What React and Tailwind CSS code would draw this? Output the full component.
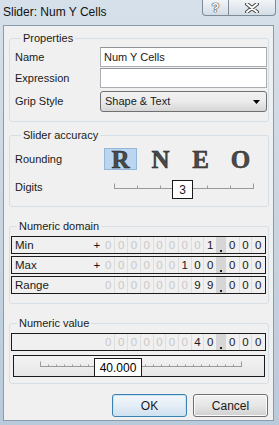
import React from "react";

const font = "font-['Liberation_Sans',Arial,sans-serif]";

function Digit({ value, dim }) {
  return (
    <span
      className={`flex w-[12.7px] items-center justify-center border-l border-[#dedede] first:border-l-0 ${
        dim ? "text-[#c8c8c8]" : "text-[#1a1a1a]"
      }`}
    >
      {value}
    </span>
  );
}

function DigitRow({ label, sign, whole, frac }) {
  const dimCount = 9 - whole.length;
  return (
    <div className="flex h-[18px] items-stretch border border-[#1a1a1a] bg-[#f0f0f0] pr-[1px] text-[11.5px] leading-[16px]">
      <span className="flex-1 pl-[3px] text-[#1a1a1a]">{label}</span>
      <span className="flex w-[10px] items-center justify-center text-[#1a1a1a]">{sign}</span>
      <span className="flex">
        {Array.from({ length: dimCount }).map((_, i) => (
          <Digit key={"z" + i} value="0" dim />
        ))}
        {whole.split("").map((d, i) => (
          <Digit key={"w" + i} value={d} />
        ))}
      </span>
      <span className="relative w-[10px] bg-[#d6d6d6]">
        <span className="absolute bottom-[1px] left-[4px] h-[2px] w-[2px] bg-[#202020]" />
      </span>
      <span className="flex">
        {frac.split("").map((d, i) => (
          <Digit key={"f" + i} value={d} />
        ))}
      </span>
    </div>
  );
}

function Group({ title, className, children }) {
  return (
    <fieldset
      className={`ml-[5px] mr-[4px] rounded-[3px] border border-[#d5dfe5] ${className}`}
    >
      <legend className="ml-[6px] px-[2px] leading-[14px] text-[#1a1a1a]">{title}</legend>
      {children}
    </fieldset>
  );
}

function Ticks({ width, count, tall }) {
  const step = (width - 1) / count;
  return (
    <svg width={width} height="8" className="block">
      <line x1="0" y1="6.5" x2={width} y2="6.5" stroke="#9a9a9a" strokeWidth="1" />
      {Array.from({ length: count + 1 }).map((_, i) => {
        const x = Math.round(i * step) + 0.5;
        const end = i === 0 || i === count;
        const h = end ? 5 : tall ? 3 : 2;
        return <line key={i} x1={x} y1={6.5 - h} x2={x} y2="7" stroke="#9a9a9a" strokeWidth="1" />;
      })}
    </svg>
  );
}

function WinButton({ children, primary }) {
  return (
    <button
      className={`h-[23px] w-[75px] rounded-[3px] border bg-gradient-to-b text-[12px] text-[#1a1a1a] ${
        primary
          ? "border-[#3c7fb1] from-[#f3f8fc] via-[#e4eef6] to-[#cfe0ee] shadow-[inset_0_0_0_1px_#c9e4f5]"
          : "border-[#707070] from-[#f2f2f2] via-[#e6e6e6] to-[#d0d0d0] shadow-[inset_0_0_0_1px_#fbfbfb]"
      }`}
    >
      {children}
    </button>
  );
}

function Letter({ ch, active }) {
  return (
    <span
      className={`flex h-[22px] w-[33px] items-center justify-center font-['Liberation_Serif',serif] text-[25px] font-bold leading-none text-[#4a4a4a] [-webkit-text-stroke:0.5px_#1e1e1e] ${
        active ? "border border-[#94b8dc] bg-[#bcd6ef]" : "border border-transparent"
      }`}
    >
      {ch}
    </span>
  );
}

export default function App() {
  return (
    <div
      className={`${font} flex h-[425px] w-[279px] flex-col overflow-hidden bg-gradient-to-b from-[#d6e0ea] via-[#c9d6e2] to-[#b9cadb] text-[11px]`}
    >
      {/* title bar */}
      <div className="flex h-[25px] shrink-0 items-start">
        <span className="ml-[3px] mt-[3px] text-[12px] text-[#111]">Slider: Num Y Cells</span>
        <div className="ml-auto mr-[3px] flex h-[16px]">
          <span className="flex w-[27px] items-center justify-center rounded-bl-[4px] border border-t-0 border-[#7d8a99] bg-gradient-to-b from-[#f2f5f8] to-[#d3dce6] text-[13px] font-bold leading-none text-white [text-shadow:0_0_1px_#333,0_0_1px_#333,0_0_1px_#333]">
            ?
          </span>
          <span className="flex w-[47px] items-center justify-center rounded-br-[4px] border border-l-0 border-t-0 border-[#7d8a99] bg-gradient-to-b from-[#f2f5f8] to-[#d3dce6]">
            <svg width="14" height="10" viewBox="0 0 14 10">
              <path d="M2 1 L12 9 M12 1 L2 9" stroke="#4a4a4a" strokeWidth="4" strokeLinecap="round" />
              <path d="M2 1 L12 9 M12 1 L2 9" stroke="#ffffff" strokeWidth="2" strokeLinecap="round" />
            </svg>
          </span>
        </div>
      </div>

      {/* client area */}
      <div className="ml-[3px] flex h-[396px] w-[271px] flex-col border border-[#8a9bae] bg-[#f0f0f0]">
        <Group title="Properties" className="mt-[5px] pb-[9px] pl-[5px] pr-[1px]">
          <div className="mt-[2px] grid grid-cols-[85px_1fr] items-center gap-y-[1px] text-[#1a1a1a]">
            <span>Name</span>
            <div className="flex h-[20px] items-center border border-[#abadb3] border-t-[#8f9499] bg-white pl-[3px]">
              Num Y Cells
            </div>
            <span>Expression</span>
            <div className="h-[20px] border border-[#abadb3] border-t-[#8f9499] bg-white" />
            <span className="mt-[2px]">Grip Style</span>
            <div className="mt-[2px] flex h-[21px] items-center justify-between rounded-[3px] border border-[#707070] bg-gradient-to-b from-[#f2f2f2] via-[#ebebeb] to-[#d6d6d6] pl-[4px] pr-[6px]">
              <span>Shape &amp; Text</span>
              <svg width="7" height="4" viewBox="0 0 7 4">
                <path d="M0 0 H7 L3.5 4 Z" fill="#000" />
              </svg>
            </div>
          </div>
        </Group>

        <Group title="Slider accuracy" className="mt-[6px] pb-[9px] pl-[5px] pr-[1px]">
          <div className="mt-[6px] flex h-[22px] items-center text-[#1a1a1a]">
            <span className="w-[89px]">Rounding</span>
            <div className="flex gap-[7px]">
              <Letter ch="R" active />
              <Letter ch="N" />
              <Letter ch="E" />
              <Letter ch="O" />
            </div>
          </div>
          <div className="mt-[7px] flex h-[20px] items-center text-[#1a1a1a]">
            <span className="w-[99px]">Digits</span>
            <div className="relative mt-[-2px]">
              <Ticks width={140} count={6} tall />
              <span className="absolute left-[58px] top-[-2px] flex h-[19px] w-[21px] items-center justify-center border border-[#1a1a1a] bg-white text-[12px]">
                3
              </span>
            </div>
          </div>
        </Group>

        <Group title="Numeric domain" className="mt-[12px] pb-[9px] pl-[1px] pr-[2px]">
          <div className="mt-[3px] flex flex-col gap-[2px]">
            <DigitRow label="Min" sign="+" whole="1" frac="000" />
            <DigitRow label="Max" sign="+" whole="100" frac="000" />
            <DigitRow label="Range" sign="" whole="99" frac="000" />
          </div>
        </Group>

        <Group title="Numeric value" className="mt-[12px] pb-[6px] pl-[1px] pr-[2px]">
          <div className="mt-[3px] flex flex-col gap-[4px]">
            <DigitRow label="" sign="" whole="40" frac="000" />
            <div className="ml-[2px] mr-[1px] flex h-[22px] items-center border border-[#1a1a1a] bg-gradient-to-b from-[#f4f4f4] to-[#e6e6e6] pl-[26px]">
              <div className="relative mt-[-4px]">
                <Ticks width={202} count={25} />
                <span className="absolute left-[54px] top-[-2px] flex h-[19px] w-[48px] items-center justify-center border border-[#1a1a1a] bg-white text-[12px]">
                  40.000
                </span>
              </div>
            </div>
          </div>
        </Group>

        <div className="mt-[10px] flex justify-end gap-[6px] pr-[5px]">
          <WinButton primary>OK</WinButton>
          <WinButton>Cancel</WinButton>
        </div>
      </div>
    </div>
  );
}
